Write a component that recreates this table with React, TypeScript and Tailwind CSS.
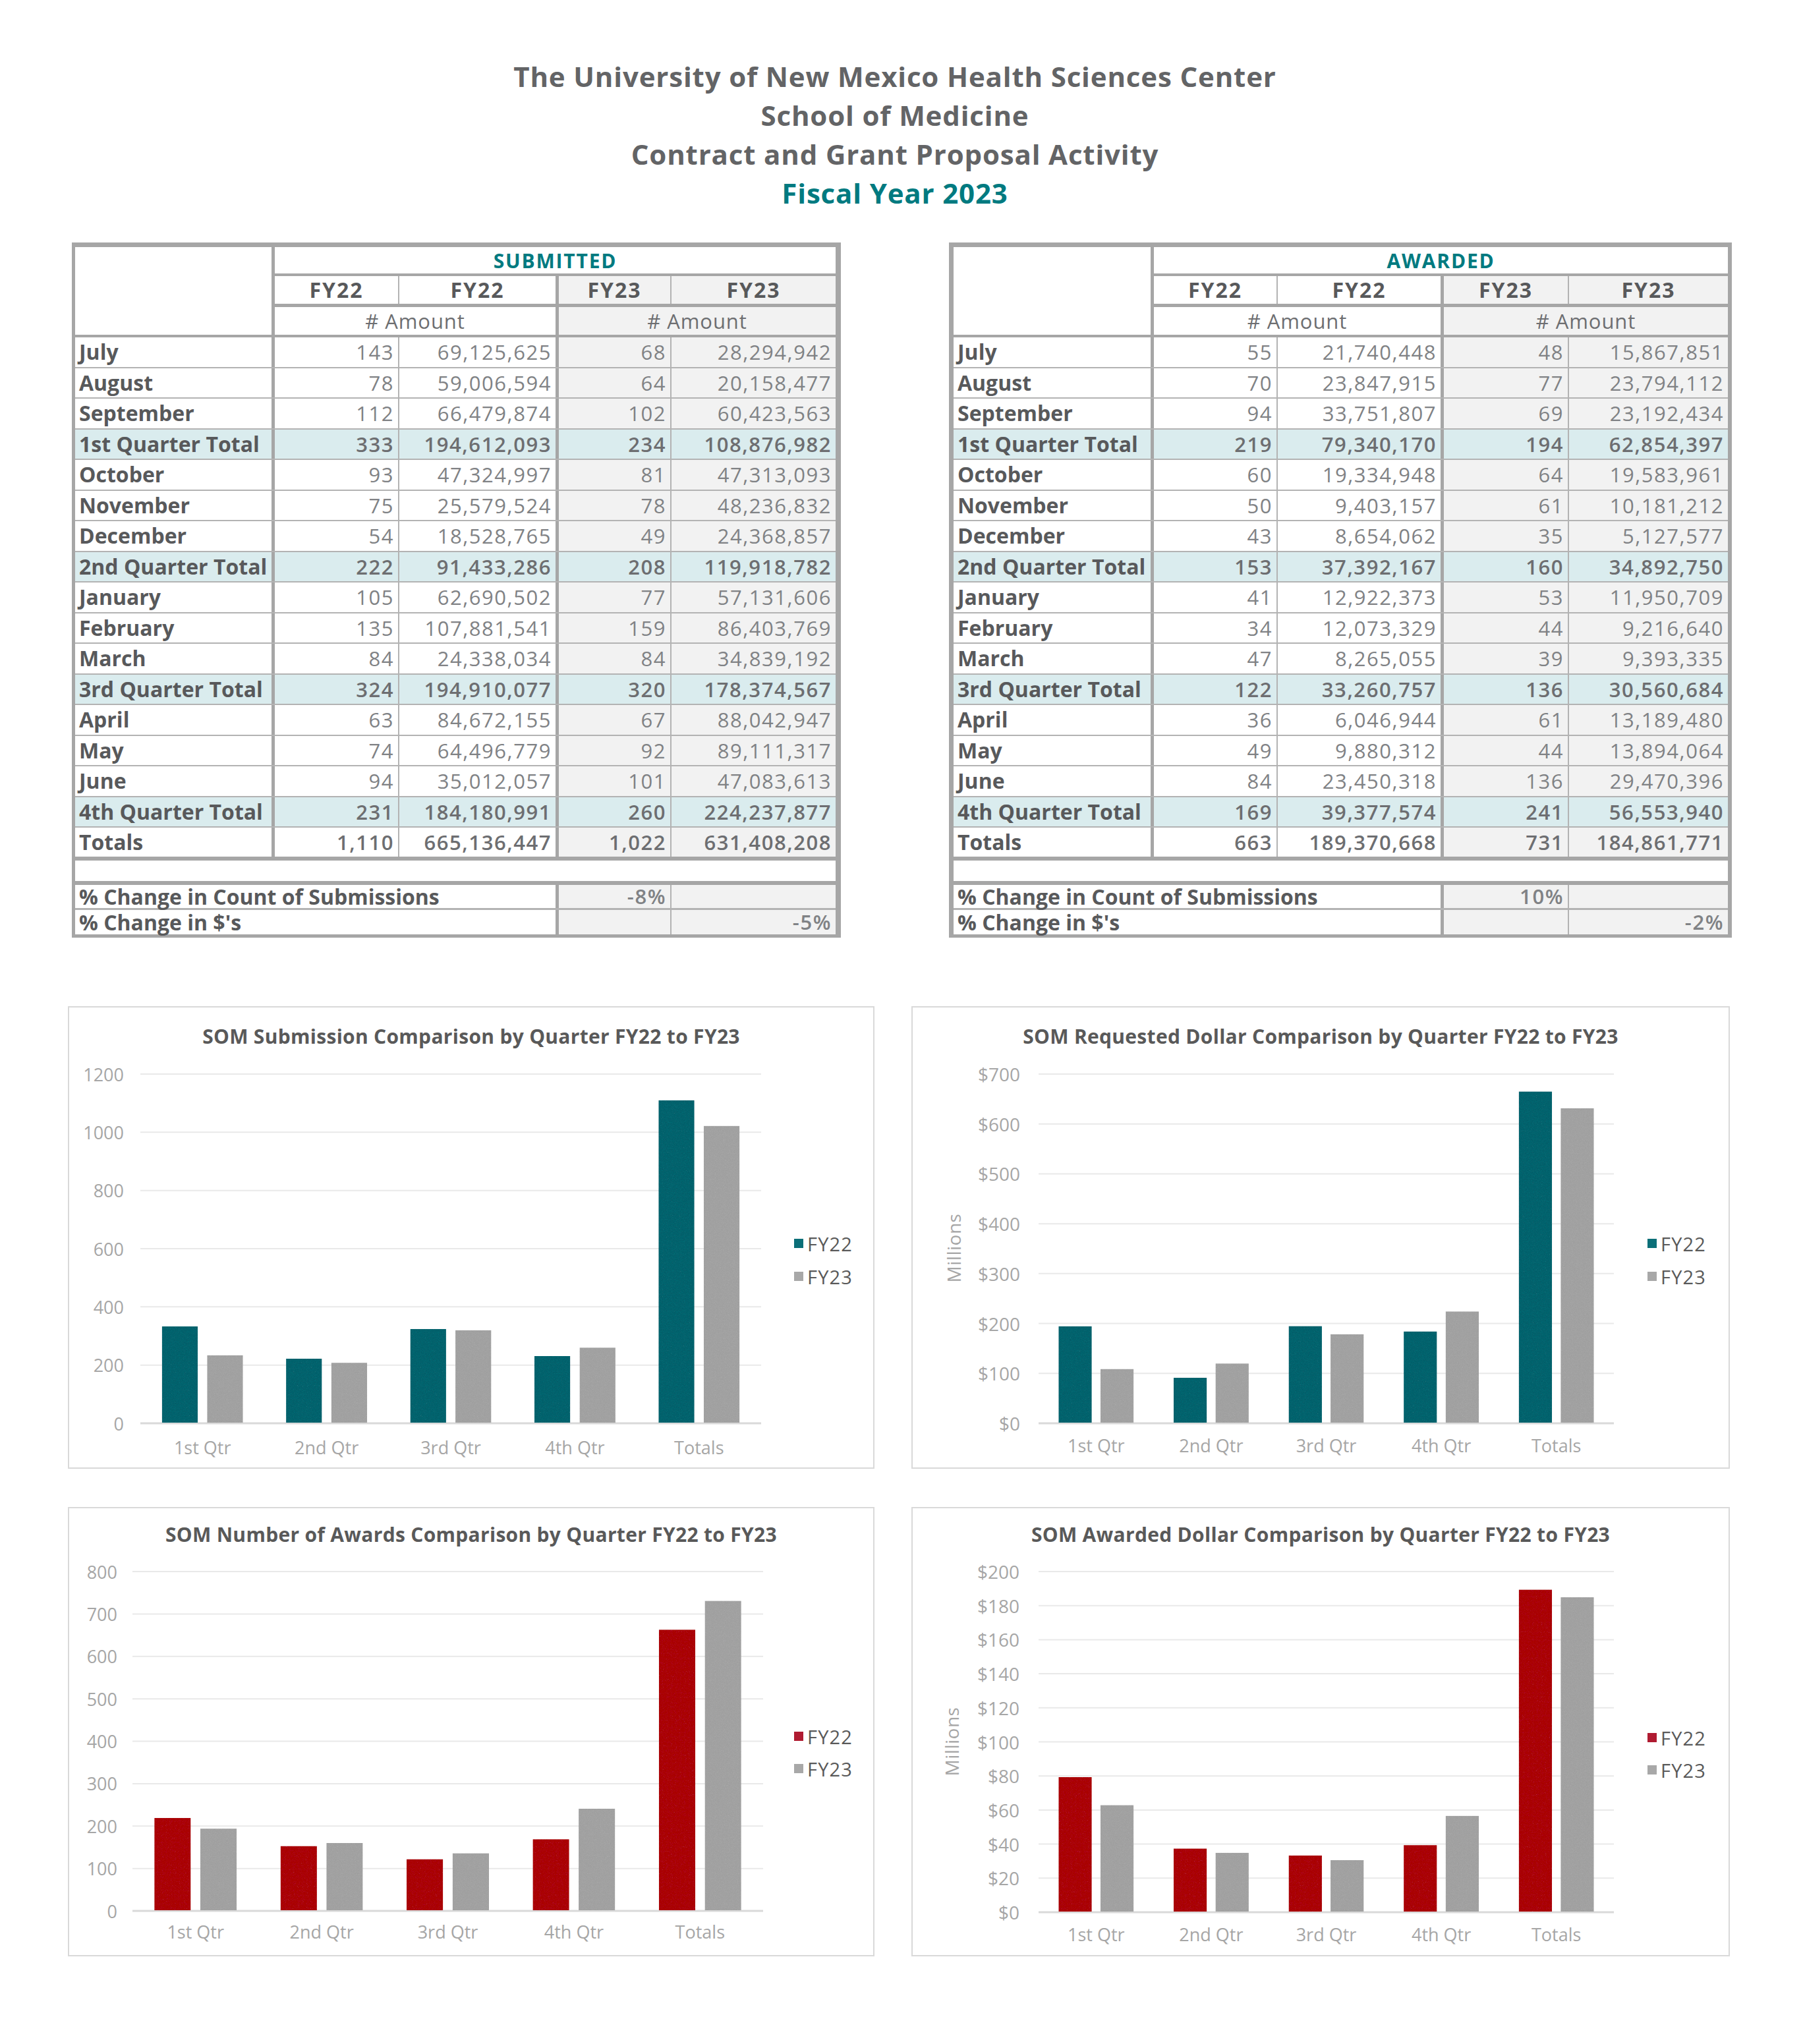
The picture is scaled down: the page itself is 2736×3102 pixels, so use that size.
import React from 'react';

type Row = [string, string, string, string, string];

const subRows: Row[] = [
  ['July', '143', '69,125,625', '68', '28,294,942'],
  ['August', '78', '59,006,594', '64', '20,158,477'],
  ['September', '112', '66,479,874', '102', '60,423,563'],
  ['1st Quarter Total', '333', '194,612,093', '234', '108,876,982'],
  ['October', '93', '47,324,997', '81', '47,313,093'],
  ['November', '75', '25,579,524', '78', '48,236,832'],
  ['December', '54', '18,528,765', '49', '24,368,857'],
  ['2nd Quarter Total', '222', '91,433,286', '208', '119,918,782'],
  ['January', '105', '62,690,502', '77', '57,131,606'],
  ['February', '135', '107,881,541', '159', '86,403,769'],
  ['March', '84', '24,338,034', '84', '34,839,192'],
  ['3rd Quarter Total', '324', '194,910,077', '320', '178,374,567'],
  ['April', '63', '84,672,155', '67', '88,042,947'],
  ['May', '74', '64,496,779', '92', '89,111,317'],
  ['June', '94', '35,012,057', '101', '47,083,613'],
  ['4th Quarter Total', '231', '184,180,991', '260', '224,237,877'],
  ['Totals', '1,110', '665,136,447', '1,022', '631,408,208'],
];

const awdRows: Row[] = [
  ['July', '55', '21,740,448', '48', '15,867,851'],
  ['August', '70', '23,847,915', '77', '23,794,112'],
  ['September', '94', '33,751,807', '69', '23,192,434'],
  ['1st Quarter Total', '219', '79,340,170', '194', '62,854,397'],
  ['October', '60', '19,334,948', '64', '19,583,961'],
  ['November', '50', '9,403,157', '61', '10,181,212'],
  ['December', '43', '8,654,062', '35', '5,127,577'],
  ['2nd Quarter Total', '153', '37,392,167', '160', '34,892,750'],
  ['January', '41', '12,922,373', '53', '11,950,709'],
  ['February', '34', '12,073,329', '44', '9,216,640'],
  ['March', '47', '8,265,055', '39', '9,393,335'],
  ['3rd Quarter Total', '122', '33,260,757', '136', '30,560,684'],
  ['April', '36', '6,046,944', '61', '13,189,480'],
  ['May', '49', '9,880,312', '44', '13,894,064'],
  ['June', '84', '23,450,318', '136', '29,470,396'],
  ['4th Quarter Total', '169', '39,377,574', '241', '56,553,940'],
  ['Totals', '663', '189,370,668', '731', '184,861,771'],
];

type ColSet = {
  c0: string;
  c1: string;
  c2: string;
  c3: string;
  c4: string;
  g1: string;
  g2: string;
  span: string;
  outer: string;
};

const leftCols: ColSet = {
  c0: 'w-[303px]',
  c1: 'w-[189px]',
  c2: 'w-[242px]',
  c3: 'w-[171px]',
  c4: 'w-[249px]',
  g1: 'w-[431px]',
  g2: 'w-[420px]',
  span: 'w-[734px]',
  outer: 'w-[1167px] border-l-[5px] border-r-[8px]',
};

const rightCols: ColSet = {
  c0: 'w-[304px]',
  c1: 'w-[188px]',
  c2: 'w-[252px]',
  c3: 'w-[190px]',
  c4: 'w-[241px]',
  g1: 'w-[440px]',
  g2: 'w-[431px]',
  span: 'w-[744px]',
  outer: 'w-[1188px] border-l-[7px] border-r-[6px]',
};

const numBase = 'flex items-center justify-end pr-[6px] text-[31px] tracking-[0.05em] shrink-0 whitespace-nowrap';
const labelBase = 'flex items-center pl-[6px] font-bold text-[32px] tracking-normal text-[#58595b] whitespace-nowrap';

function DataTable({ title, rows, pct, cols }: { title: string; rows: Row[]; pct: [string, string]; cols: ColSet }) {
  return (
    <div className={`${cols.outer} shrink-0 border-t-[7px] border-b-[5px] border-[#a6a6a6] bg-white`}>
      <div className="flex border-b-4 border-[#a6a6a6]">
        <div className={`${cols.c0} shrink-0 h-[133px] border-r-[5px] border-[#a6a6a6]`} />
        <div className="flex-1 flex flex-col">
          <div className="h-[44px] border-b-4 border-[#a6a6a6] flex items-center justify-center text-[#007a80] font-bold text-[30px] tracking-[0.06em]">
            {title}
          </div>
          <div className="h-[47px] flex border-b-[5px] border-[#a6a6a6] font-bold text-[32px] tracking-[0.06em] text-[#58595b]">
            <div className={`${cols.c1} shrink-0 border-r-2 border-[#b3b3b3] flex items-center justify-center`}>FY22</div>
            <div className={`${cols.c2} shrink-0 border-r-[5px] border-[#a6a6a6] flex items-center justify-center`}>FY22</div>
            <div className={`${cols.c3} shrink-0 border-r-2 border-[#b3b3b3] bg-[#f2f2f2] flex items-center justify-center`}>FY23</div>
            <div className={`${cols.c4} shrink-0 bg-[#f2f2f2] flex items-center justify-center`}>FY23</div>
          </div>
          <div className="h-[42px] flex text-[31px] tracking-[0.03em] text-[#6d6e71]">
            <div className={`${cols.g1} shrink-0 border-r-[5px] border-[#a6a6a6] flex items-center justify-center`}># Amount</div>
            <div className={`${cols.g2} shrink-0 bg-[#f2f2f2] flex items-center justify-center`}># Amount</div>
          </div>
        </div>
      </div>
      {rows.map((r, i) => {
        const isQ = r[0].includes('Quarter');
        const isT = r[0] === 'Totals';
        const bold = isQ || isT;
        const rowCls = isT
          ? 'h-[50px] border-b-[6px] border-[#a6a6a6]'
          : 'h-[46.5px] border-b-2 border-[#b3b3b3]';
        const bg = isQ ? 'bg-[#daecee]' : '';
        const f23 = isQ ? '' : 'bg-[#f2f2f2]';
        const numCls = bold ? 'font-semibold text-[#6d6e71]' : 'text-[#808285]';
        return (
          <div key={i} className={`flex ${rowCls} ${bg}`}>
            <div className={`${cols.c0} shrink-0 border-r-[5px] border-[#a6a6a6] ${labelBase}`}>{r[0]}</div>
            <div className={`${cols.c1} border-r-2 border-[#b3b3b3] ${numBase} ${numCls}`}>{r[1]}</div>
            <div className={`${cols.c2} border-r-[5px] border-[#a6a6a6] ${numBase} ${numCls}`}>{r[2]}</div>
            <div className={`${cols.c3} border-r-2 border-[#b3b3b3] ${f23} ${numBase} ${numCls}`}>{r[3]}</div>
            <div className={`${cols.c4} ${f23} ${numBase} ${numCls}`}>{r[4]}</div>
          </div>
        );
      })}
      <div className="h-[37px] border-b-[6px] border-[#a6a6a6]" />
      <div className="flex h-[38px] border-b-[3px] border-[#b3b3b3]">
        <div className={`${cols.span} shrink-0 border-r-[5px] border-[#a6a6a6] ${labelBase}`}>% Change in Count of Submissions</div>
        <div className={`${cols.c3} border-r-2 border-[#b3b3b3] bg-[#f2f2f2] ${numBase} font-semibold text-[#808285]`}>{pct[0]}</div>
        <div className={`${cols.c4} bg-[#f2f2f2] ${numBase}`} />
      </div>
      <div className="flex h-[37px]">
        <div className={`${cols.span} shrink-0 border-r-[5px] border-[#a6a6a6] ${labelBase}`}>% Change in $'s</div>
        <div className={`${cols.c3} border-r-2 border-[#b3b3b3] bg-[#f2f2f2] ${numBase}`} />
        <div className={`${cols.c4} bg-[#f2f2f2] ${numBase} font-semibold text-[#808285]`}>{pct[1]}</div>
      </div>
    </div>
  );
}

type ChartCfg = {
  id: string;
  W: number;
  H: number;
  boxCls: string;
  title: string;
  tx: number;
  ty: number;
  gl: number;
  gr: number;
  gt: number;
  gb: number;
  max: number;
  step: number;
  dollar: boolean;
  ylx: number;
  xly: number;
  lgx: number;
  lg1: number;
  lg2: number;
  color: string;
  a: number[];
  b: number[];
  millions?: { x: number; y: number };
};

const cats = ['1st Qtr', '2nd Qtr', '3rd Qtr', '4th Qtr', 'Totals'];
const FONT = "'Open Sans', 'Liberation Sans', sans-serif";
const GRAY = '#a8a8a8';

function Chart({ c }: { c: ChartCfg }) {
  const ticks: number[] = [];
  for (let v = 0; v <= c.max + 0.001; v += c.step) ticks.push(Math.round(v));
  const ph = c.gb - c.gt;
  const catW = (c.gr - c.gl) / 5;
  const bw = catW * 0.289;
  const gap = catW * 0.075;
  const yOf = (v: number) => c.gb - (v / c.max) * ph;
  return (
    <div className={`${c.boxCls} shrink-0 border-2 border-[#d9d9d9] bg-white`}>
      <svg width={c.W - 4} height={c.H - 4} viewBox={`2 2 ${c.W - 4} ${c.H - 4}`} className="block">
        <defs>
          <filter id={`nz${c.id}`} x="0" y="0" width="100%" height="100%">
            <feTurbulence type="fractalNoise" baseFrequency="0.85" numOctaves="3" seed="4" result="t" />
            <feColorMatrix in="t" type="saturate" values="0" result="g" />
            <feComposite in="SourceGraphic" in2="g" operator="arithmetic" k1="0" k2="1" k3="0.16" k4="-0.08" result="m" />
            <feComposite in="m" in2="SourceGraphic" operator="in" />
          </filter>
        </defs>
        <text x={c.tx} y={c.ty} textAnchor="middle" dominantBaseline="central" fontFamily={FONT} fontSize={30} fontWeight={700} letterSpacing="0.3" fill="#595959">
          {c.title}
        </text>
        {ticks.map((v) => (
          <g key={v}>
            <line x1={c.gl} x2={c.gr} y1={yOf(v)} y2={yOf(v)} stroke={v === 0 ? '#d9d9d9' : '#e9e9e9'} strokeWidth={v === 0 ? 3 : 2} />
            <text x={c.ylx} y={yOf(v)} textAnchor="end" dominantBaseline="central" fontFamily={FONT} fontSize={c.dollar ? 28 : 27} fill="#a6a6a6">
              {c.dollar ? `$${v}` : `${v}`}
            </text>
          </g>
        ))}
        <g filter={`url(#nz${c.id})`}>
          {c.a.map((v, i) => {
            const cx = c.gl + catW * (i + 0.5);
            return (
              <g key={i}>
                <rect x={cx - gap / 2 - bw} y={yOf(v)} width={bw} height={c.gb - yOf(v) - 1} fill={c.color} />
                <rect x={cx + gap / 2} y={yOf(c.b[i])} width={bw} height={c.gb - yOf(c.b[i]) - 1} fill={GRAY} />
              </g>
            );
          })}
        </g>
        {cats.map((t, i) => (
          <text key={t} x={c.gl + catW * (i + 0.5)} y={c.xly} textAnchor="middle" dominantBaseline="central" fontFamily={FONT} fontSize={27} fill="#a6a6a6">
            {t}
          </text>
        ))}
        {c.millions && (
          <text
            x={c.millions.x}
            y={c.millions.y}
            textAnchor="middle"
            dominantBaseline="central"
            fontFamily={FONT}
            fontSize={28}
            letterSpacing="0.5"
            fill="#a6a6a6"
            transform={`rotate(-90 ${c.millions.x} ${c.millions.y})`}
          >
            Millions
          </text>
        )}
        <rect x={c.lgx} y={c.lg1 - 7} width={14} height={14} fill={c.color} />
        <text x={c.lgx + 20} y={c.lg1} dominantBaseline="central" fontFamily={FONT} fontSize={29} fontWeight={500} letterSpacing="1.2" fill="#595959">
          FY22
        </text>
        <rect x={c.lgx} y={c.lg2 - 7} width={14} height={14} fill={GRAY} />
        <text x={c.lgx + 20} y={c.lg2} dominantBaseline="central" fontFamily={FONT} fontSize={29} fontWeight={500} letterSpacing="1.2" fill="#595959">
          FY23
        </text>
      </svg>
    </div>
  );
}

const TEAL = '#0b6f78';
const RED = '#b01b31';

const charts: ChartCfg[] = [
  {
    id: 'a', W: 1224, H: 702, boxCls: 'w-[1224px] h-[702px]',
    title: 'SOM Submission Comparison by Quarter FY22 to FY23',
    tx: 612, ty: 45, gl: 110, gr: 1052, gt: 103, gb: 633, max: 1200, step: 200, dollar: false,
    ylx: 85, xly: 669, lgx: 1102, lg1: 360, lg2: 410, color: TEAL,
    a: [333, 222, 324, 231, 1110], b: [234, 208, 320, 260, 1022],
  },
  {
    id: 'b', W: 1242, H: 702, boxCls: 'w-[1242px] h-[702px]',
    title: 'SOM Requested Dollar Comparison by Quarter FY22 to FY23',
    tx: 621, ty: 45, gl: 193, gr: 1066, gt: 103, gb: 633, max: 700, step: 100, dollar: true,
    ylx: 165, xly: 666, lgx: 1117, lg1: 360, lg2: 410, color: TEAL,
    a: [194.6, 91.4, 194.9, 184.2, 665.1], b: [108.9, 119.9, 178.4, 224.2, 631.4],
    millions: { x: 64, y: 367 },
  },
  {
    id: 'c', W: 1224, H: 682, boxCls: 'w-[1224px] h-[682px]',
    title: 'SOM Number of Awards Comparison by Quarter FY22 to FY23',
    tx: 612, ty: 41, gl: 98, gr: 1055, gt: 98, gb: 613, max: 800, step: 100, dollar: false,
    ylx: 75, xly: 644, lgx: 1102, lg1: 348, lg2: 397, color: RED,
    a: [219, 153, 122, 169, 663], b: [194, 160, 136, 241, 731],
  },
  {
    id: 'd', W: 1242, H: 682, boxCls: 'w-[1242px] h-[682px]',
    title: 'SOM Awarded Dollar Comparison by Quarter FY22 to FY23',
    tx: 621, ty: 41, gl: 193, gr: 1066, gt: 98, gb: 615, max: 200, step: 20, dollar: true,
    ylx: 164, xly: 648, lgx: 1117, lg1: 350, lg2: 399, color: RED,
    a: [79.3, 37.4, 33.3, 39.4, 189.4], b: [62.9, 34.9, 30.6, 56.6, 184.9],
    millions: { x: 61, y: 356 },
  },
];

export default function App() {
  return (
    <div className="w-[2736px] h-[3102px] bg-white flex flex-col font-['Open_Sans','Liberation_Sans',sans-serif]">
      <div className="pt-[86px] pr-[20px] flex flex-col items-center text-[42px] font-bold leading-[59px] tracking-[0.02em] text-[#636466]">
        <div>The University of New Mexico Health Sciences Center</div>
        <div>School of Medicine</div>
        <div>Contract and Grant Proposal Activity</div>
        <div className="text-[#007a80]">Fiscal Year 2023</div>
      </div>
      <div className="mt-[46px] flex pl-[109px] gap-[164px] items-start">
        <DataTable title="SUBMITTED" rows={subRows} pct={['-8%', '-5%']} cols={leftCols} />
        <DataTable title="AWARDED" rows={awdRows} pct={['10%', '-2%']} cols={rightCols} />
      </div>
      <div className="mt-[104px] pl-[103px] flex gap-[56px] items-start">
        <Chart c={charts[0]} />
        <Chart c={charts[1]} />
      </div>
      <div className="mt-[58px] pl-[103px] flex gap-[56px] items-start">
        <Chart c={charts[2]} />
        <Chart c={charts[3]} />
      </div>
    </div>
  );
}
